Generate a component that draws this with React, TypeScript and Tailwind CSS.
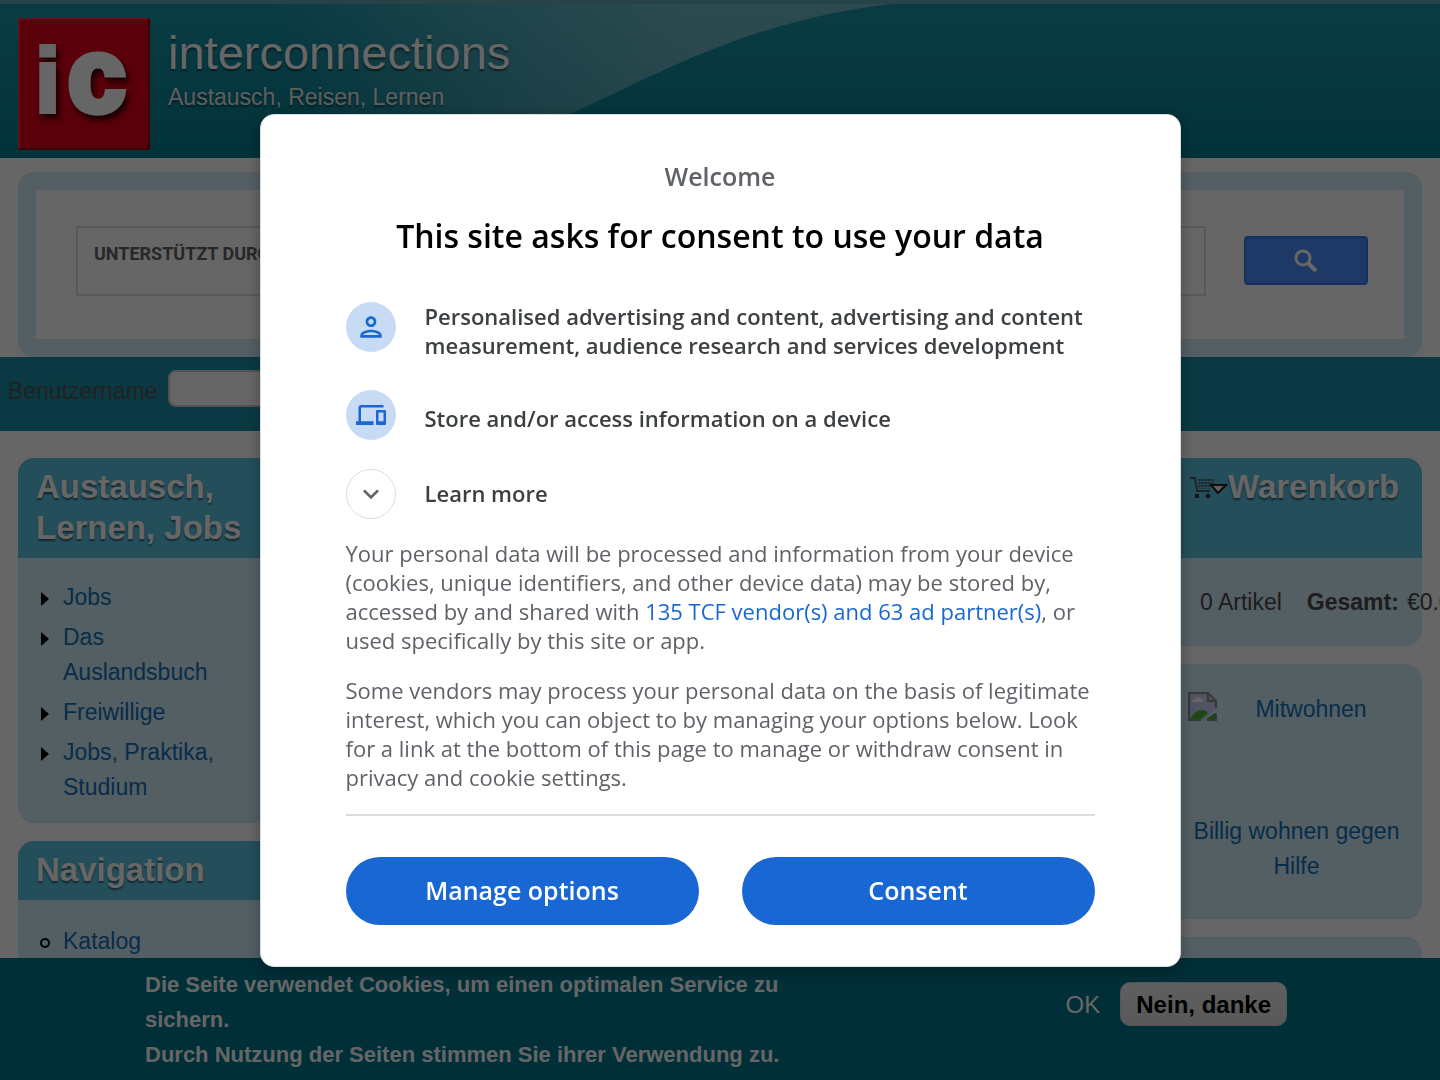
import type { ReactNode } from "react";
import { MdDevices, MdExpandMore, MdOutlinePerson } from "react-icons/md";

const titleShadow = "[text-shadow:0_2px_2px_rgba(0,0,0,0.5)]";

function Logo() {
  return (
    <svg viewBox="0 0 132 132" className="size-[132px] shrink-0" role="img" aria-label="interconnections Logo">
      <defs>
        <filter id="logoShadow" x="-20%" y="-20%" width="150%" height="150%">
          <feDropShadow dx="3" dy="5" stdDeviation="3" floodColor="#000" floodOpacity="0.75" />
        </filter>
      </defs>
      <rect width="132" height="132" fill="#e2001a" />
      <path d="M0 0H132L130 2H2V130L0 132Z" fill="#ee2a44" />
      <path d="M132 0V132H0L2 130H130V2Z" fill="#90000f" />
      <g fill="#fff" stroke="#fff" fontFamily="Liberation Sans, sans-serif" fontWeight="700" filter="url(#logoShadow)">
        <text x="17" y="94" fontSize="91" strokeWidth="4">i</text>
        <text x="50" y="93" fontSize="103" strokeWidth="7">c</text>
      </g>
    </svg>
  );
}

function Header() {
  return (
    <header className="relative h-[158px] overflow-hidden border-t-4 border-[#64a8b4] bg-linear-to-b from-[#1b95a8] to-[#057c90]">
      <svg
        className="absolute -top-1 left-0 h-[158px] w-[960px]"
        viewBox="0 0 960 158"
        preserveAspectRatio="none"
        aria-hidden="true"
      >
        <defs>
          <linearGradient id="swoosh" gradientUnits="userSpaceOnUse" x1="300" y1="100" x2="680" y2="0">
            <stop offset="0" stopColor="#fff" stopOpacity="0" />
            <stop offset="0.5" stopColor="#fff" stopOpacity="0.2" />
            <stop offset="1" stopColor="#fff" stopOpacity="0.36" />
          </linearGradient>
        </defs>
        <path d="M0 0H940C815 6 725 42 660 72C620 90 590 105 570 114L480 158H0Z" fill="url(#swoosh)" />
      </svg>
      <div className="relative flex gap-[18px] px-[18px] pt-[14px]">
        <Logo />
        <div className="pt-2">
          <h1 className={`text-[47px] leading-[54px] text-white ${titleShadow}`}>interconnections</h1>
          <p className={`text-[23px] leading-[34px] text-white/90 ${titleShadow}`}>Austausch, Reisen, Lernen</p>
        </div>
      </div>
    </header>
  );
}

function Block({ title, children }: { title?: ReactNode; children?: ReactNode }) {
  return (
    <section className="rounded-2xl bg-[#d0edf8]">
      {title && (
        <h2
          className={`rounded-t-2xl bg-[#5cc4e4] px-[18px] pt-2 pb-[10px] text-[33px] leading-[41px] font-bold text-white ${titleShadow}`}
        >
          {title}
        </h2>
      )}
      {children}
    </section>
  );
}

function MenuItem({ bullet, children }: { bullet: "arrow" | "circle"; children: ReactNode }) {
  return (
    <li className="flex gap-[13px]">
      <svg viewBox="0 0 10 14" className="mt-3 h-[14px] w-[10px] shrink-0" aria-hidden="true">
        {bullet === "arrow" ? (
          <path d="M1 0L9 7L1 14Z" />
        ) : (
          <circle cx="5" cy="7" r="4" fill="none" stroke="#000" strokeWidth="2" />
        )}
      </svg>
      <a href="#" className="text-[#1570b8]">{children}</a>
    </li>
  );
}

function CartIcon() {
  return (
    <svg viewBox="0 0 38 22" className="mt-[10px] ml-px h-[22px] w-[38px] shrink-0" aria-hidden="true">
      <path d="M0 2H5L7 15H20" fill="none" stroke="#555" strokeWidth="2" />
      <path d="M8 4H24M8 7H24M8 10H22M10 3V13M13 3V13M16 3V13M19 3V13M23 3V8" stroke="#444" strokeWidth="1" strokeDasharray="2 1" />
      <rect x="5" y="18" width="4" height="4" fill="#333" />
      <rect x="16" y="18" width="4" height="4" fill="#333" />
      <path d="M21 9H36L28 17Z" fill="#eee" stroke="#222" strokeWidth="2" />
    </svg>
  );
}

function BrokenImage() {
  return (
    <svg viewBox="0 0 29 29" className="size-[29px] shrink-0" aria-hidden="true">
      <path d="M1 1H20L28 9V16L16 28H1Z" fill="#c5d0f5" />
      <path d="M4 10Q4 7 7 7Q9 3 12 6Q15 6 15 10Z" fill="#fff" />
      <path d="M2 27Q9 15 18 19L20 21L13 27Z" fill="#4caf2e" />
      <path d="M18 27L27 21V27Z" fill="#4caf2e" />
      <path d="M28 16V9L20 1H1V28H13M20 1V9H28M28 21V28H19" fill="none" stroke="#8c8c8c" strokeWidth="2" />
    </svg>
  );
}

function SearchIcon() {
  return (
    <svg viewBox="0 0 24 24" className="size-6" fill="none" stroke="currentColor" aria-hidden="true">
      <circle cx="9" cy="9" r="7" strokeWidth="3" />
      <path d="M14 14L22 22" strokeWidth="4" />
    </svg>
  );
}

function SearchBlock() {
  return (
    <form className="mx-[18px] mt-[14px] rounded-2xl bg-[#d0edf8] p-[18px]">
      <div className="flex h-[149px] items-start gap-[38px] bg-white pt-9 pr-9 pl-10">
        <input
          type="text"
          aria-label="Suche"
          placeholder="UNTERSTÜTZT DURCH Google"
          className="h-[70px] min-w-0 flex-1 border-2 border-[#dedede] bg-white px-4 pb-4 font-[Roboto] text-[18px] font-bold placeholder:text-[#5f6368]"
        />
        <button
          type="button"
          aria-label="Suchen"
          className="mt-[10px] flex h-[49px] w-[124px] items-center justify-center rounded border-2 border-[#3079ed] bg-[#4d90fe] text-white"
        >
          <SearchIcon />
        </button>
      </div>
    </form>
  );
}

function CookieBar() {
  return (
    <aside className="fixed inset-x-0 bottom-0 flex h-[122px] items-start justify-between bg-[#00758c] pt-[9px] pr-[153px] pl-[145px] text-white">
      <div className="w-[640px] text-[22px] leading-[35px] font-bold">
        <p>Die Seite verwendet Cookies, um einen optimalen Service zu sichern.</p>
        <p>Durch Nutzung der Seiten stimmen Sie ihrer Verwendung zu.</p>
      </div>
      <div className="flex items-center gap-5 pt-[15px] text-[24px]">
        <button type="button">OK</button>
        <button
          type="button"
          className="h-[44px] rounded-[10px] border border-[#d8d8d8] bg-linear-to-b from-[#eeeeee] to-[#dedede] px-[15px] font-bold text-black"
        >
          Nein, danke
        </button>
      </div>
    </aside>
  );
}

function ConsentDialog() {
  return (
    <div className="fixed inset-0 flex items-center justify-center bg-black/60 font-['Open_Sans',sans-serif]">
      <div
        role="dialog"
        aria-modal="true"
        aria-labelledby="consent-title"
        className="w-full max-w-[921px] rounded-[14px] border border-[#dadce0] bg-white px-[85px] pt-[41px] pb-[41px] shadow-[0_4px_16px_rgba(0,0,0,0.3)]"
      >
        <p className="text-center text-[25px] leading-10 font-semibold text-[#5f6368]">Welcome</p>
        <h2 id="consent-title" className="mt-4 text-center text-[32px] leading-[48px] font-semibold text-black">
          This site asks for consent to use your data
        </h2>

        <ul className="mt-[42px] text-[22px] leading-[29px] font-semibold text-[#3c4043]">
          <li className="flex min-h-[58px] items-center gap-[29px]">
            <span className="flex size-[50px] shrink-0 items-center justify-center self-start rounded-full bg-[#c8dbf5] text-[#1967d2]">
              <MdOutlinePerson size={32} />
            </span>
            <span>
              Personalised advertising and content, advertising and content measurement, audience research and services
              development
            </span>
          </li>
          <li className="mt-[30px] flex min-h-[58px] items-center gap-[29px]">
            <span className="flex size-[50px] shrink-0 items-center justify-center self-start rounded-full bg-[#c8dbf5] text-[#1967d2]">
              <MdDevices size={30} />
            </span>
            <span>Store and/or access information on a device</span>
          </li>
          <li className="mt-[21px]">
            <button type="button" className="flex items-center gap-[29px]">
              <span className="flex size-[50px] items-center justify-center rounded-full border border-[#dadce0] text-[#5f6368]">
                <MdExpandMore size={32} />
              </span>
              <span>Learn more</span>
            </button>
          </li>
        </ul>

        <div className="mt-5 flex flex-col gap-[21px] text-[22px] leading-[29px] text-[#5f6368]">
          <p>
            Your personal data will be processed and information from your device (cookies, unique identifiers, and other
            device data) may be stored by, accessed by and shared with{" "}
            <a href="#" className="text-[#1967d2]">135 TCF vendor(s) and 63 ad partner(s)</a>, or used specifically by
            this site or app.
          </p>
          <p>
            Some vendors may process your personal data on the basis of legitimate interest, which you can object to by
            managing your options below. Look for a link at the bottom of this page to manage or withdraw consent in
            privacy and cookie settings.
          </p>
        </div>

        <div className="mt-[22px] grid grid-cols-2 gap-[43px] border-t-2 border-[#dadce0] pt-[41px] text-[25px] font-semibold text-white">
          <button type="button" className="h-[68px] rounded-full bg-[#1967d2]">Manage options</button>
          <button type="button" className="h-[68px] rounded-full bg-[#1967d2]">Consent</button>
        </div>
      </div>
    </div>
  );
}

export default function App() {
  return (
    <div className="h-screen overflow-hidden bg-white font-['Liberation_Sans',Arial,sans-serif] text-[23px] leading-[35px] text-[#4a4a4a]">
      <Header />
      <SearchBlock />
      <form className="flex h-[74px] items-start gap-[10px] bg-[#1b90a8] px-2 pt-[13px]">
        <label htmlFor="username" className="pt-1 text-[#555555]">Benutzername</label>
        <input id="username" type="text" className="h-[37px] w-[300px] rounded-lg border-2 border-[#cccccc] bg-white px-2" />
      </form>

      <main className="flex justify-between px-[18px] pt-[27px]">
        <nav className="flex w-[290px] flex-col gap-[18px]">
          <Block title="Austausch, Lernen, Jobs">
            <ul className="flex flex-col gap-[5px] pt-[22px] pr-[60px] pb-[18px] pl-[22px]">
              <MenuItem bullet="arrow">Jobs</MenuItem>
              <MenuItem bullet="arrow">Das Auslandsbuch</MenuItem>
              <MenuItem bullet="arrow">Freiwillige</MenuItem>
              <MenuItem bullet="arrow">Jobs, Praktika, Studium</MenuItem>
            </ul>
          </Block>
          <Block title="Navigation">
            <ul className="px-[22px] pt-6 pb-[18px]">
              <MenuItem bullet="circle">Katalog</MenuItem>
              <MenuItem bullet="circle">Kontakt</MenuItem>
            </ul>
          </Block>
        </nav>

        <aside className="flex w-[290px] flex-col gap-[18px]">
          <Block
            title={
              <span className="flex h-[82px] pl-[39px]">
                <CartIcon />
                <span>Warenkorb</span>
              </span>
            }
          >
            <div className="flex h-[88px] items-center gap-[25px] pt-px pl-[68px] whitespace-nowrap">
              <span>0 Artikel</span>
              <span className="flex gap-2">
                <strong>Gesamt:</strong>
                <span>€0.00</span>
              </span>
            </div>
          </Block>
          <Block>
            <a href="#" className="block pt-7 pr-[17px] pb-[35px] pl-14 text-center text-[#1570b8]">
              <span className="flex h-[122px] items-start">
                <BrokenImage />
                <span className="flex-1">Mitwohnen</span>
              </span>
              Billig wohnen gegen Hilfe
            </a>
          </Block>
          <Block>
            <div className="h-[200px]" />
          </Block>
        </aside>
      </main>

      <CookieBar />
      <ConsentDialog />
    </div>
  );
}
